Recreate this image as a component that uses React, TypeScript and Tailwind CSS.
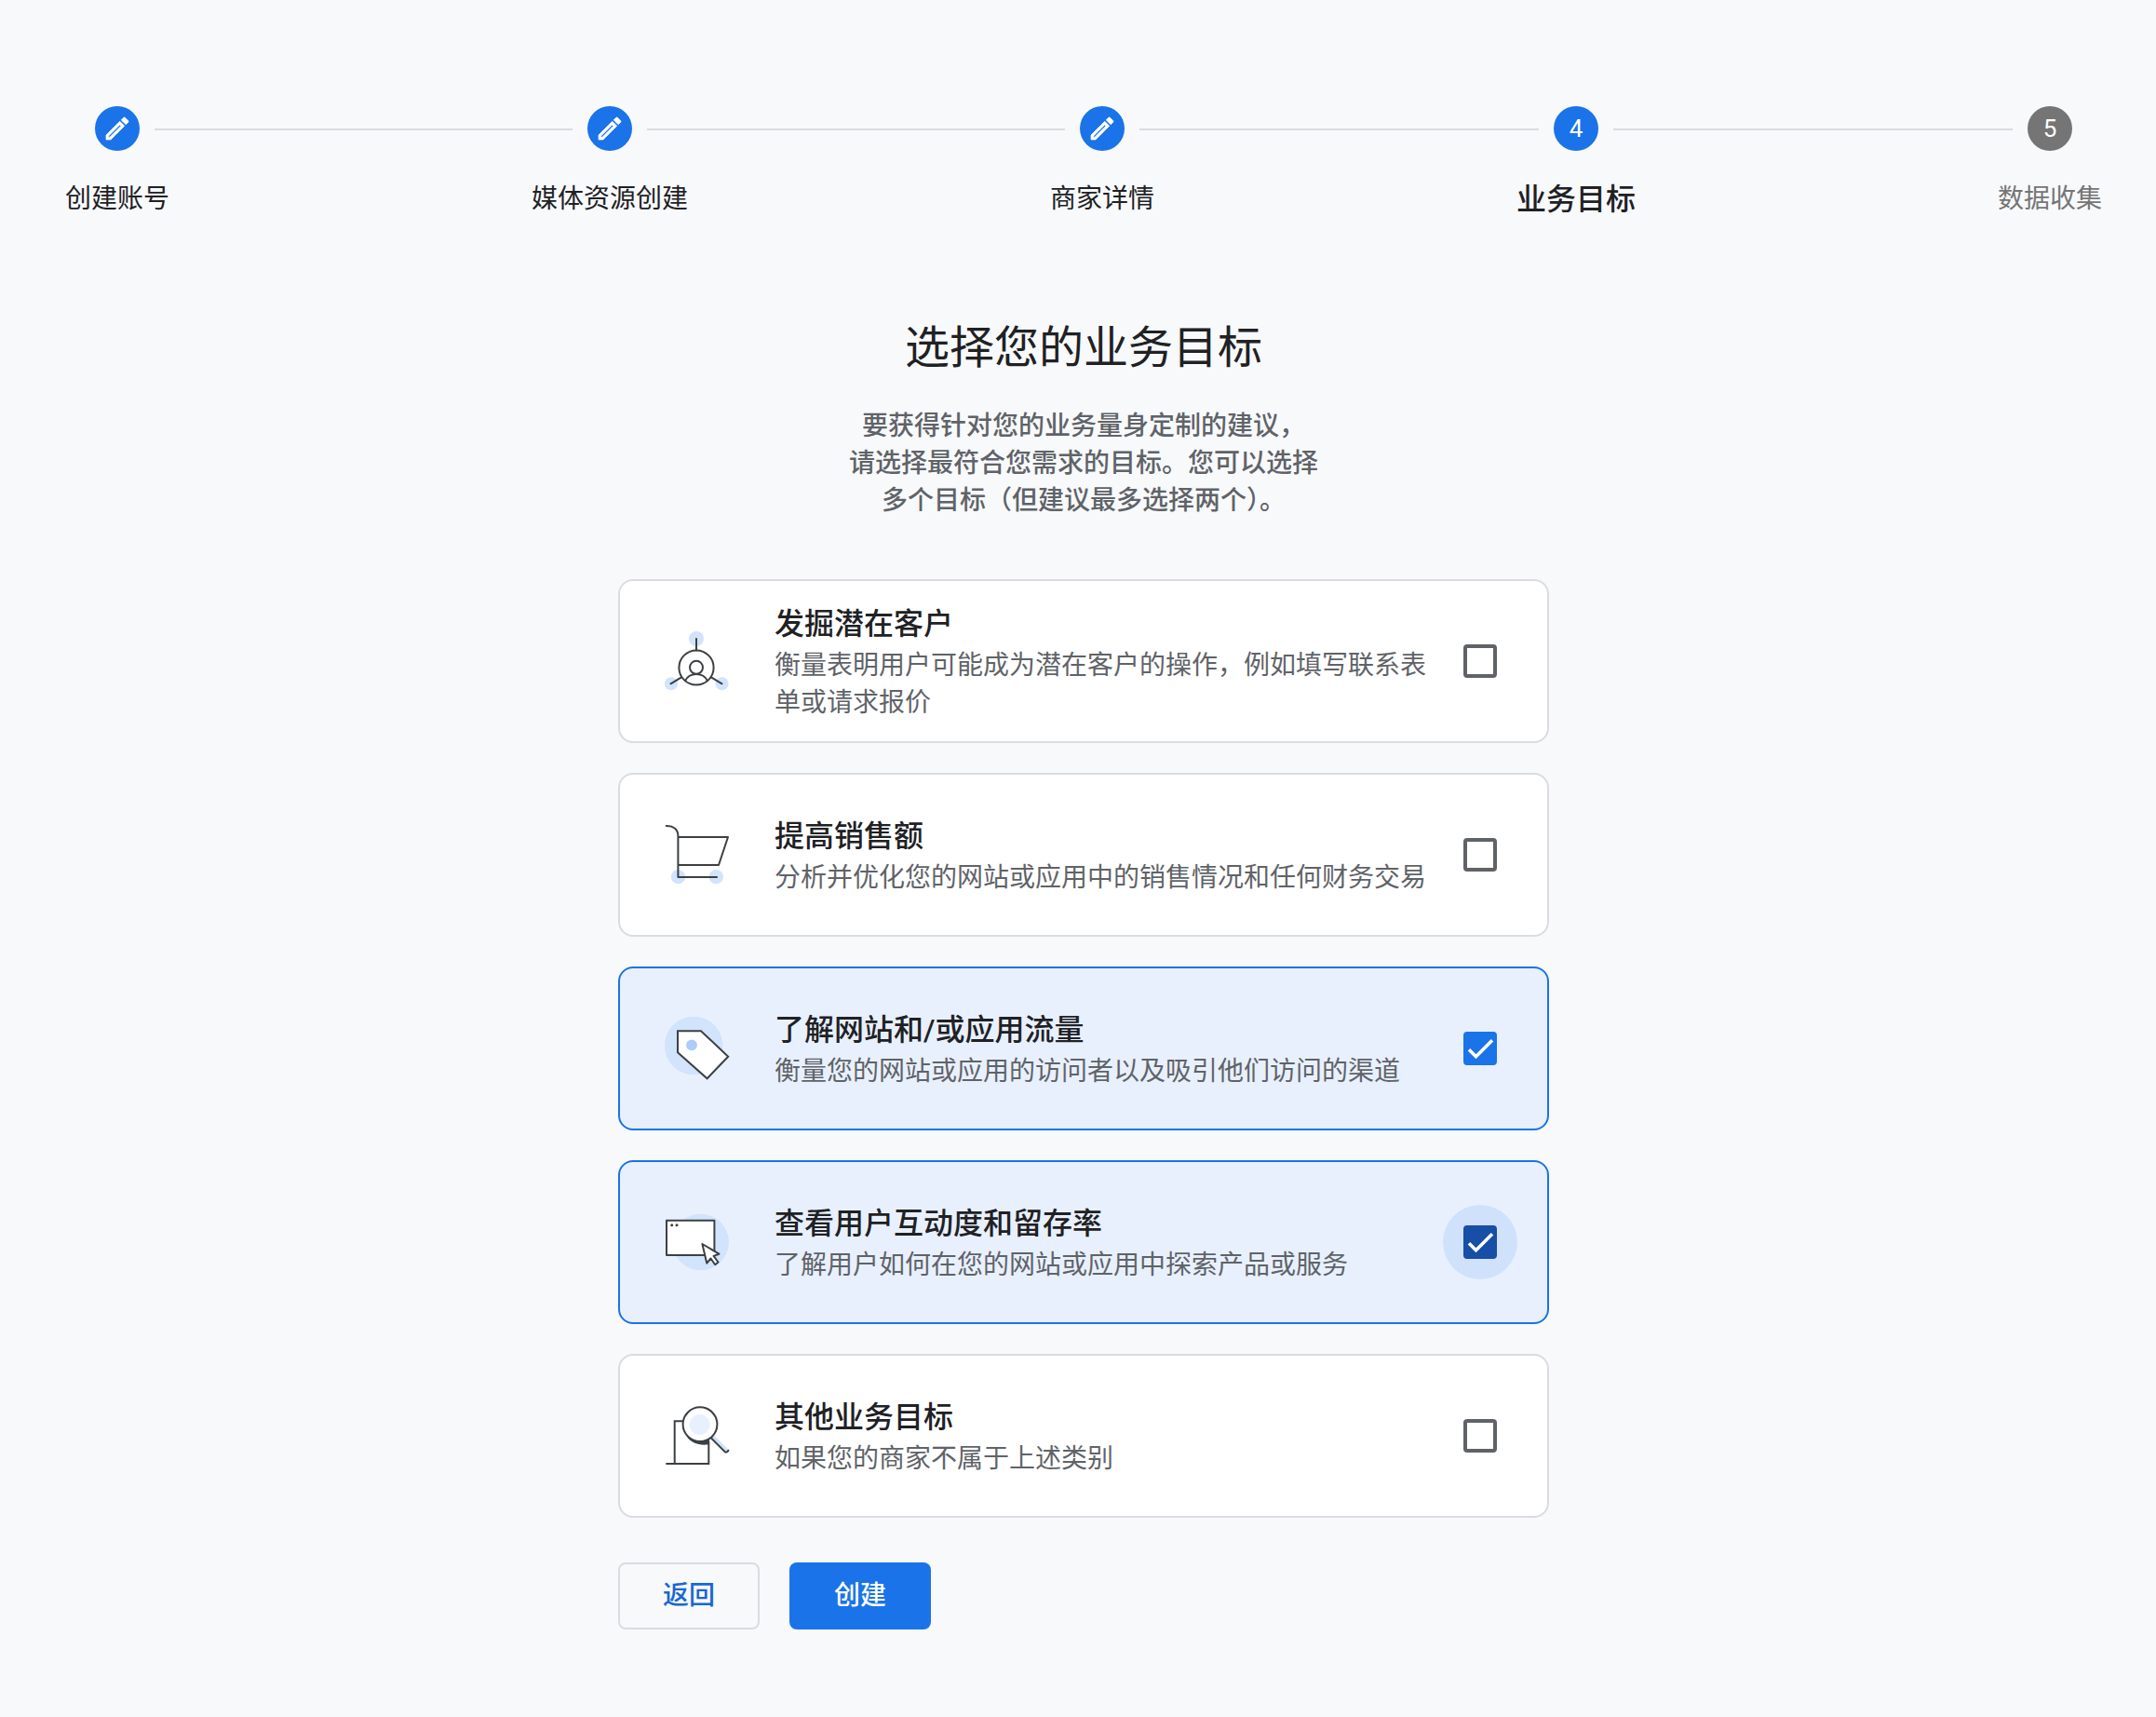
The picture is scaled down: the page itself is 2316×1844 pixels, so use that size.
import { useState, type ReactNode } from "react";
import { clsx } from "clsx";

type Goal = {
  id: string;
  title: string;
  description: string;
  icon: ReactNode;
};

type StepState = "done" | "current" | "todo";

const steps: { label: string; state: StepState }[] = [
  { label: "创建账号", state: "done" },
  { label: "媒体资源创建", state: "done" },
  { label: "商家详情", state: "done" },
  { label: "业务目标", state: "current" },
  { label: "数据收集", state: "todo" },
];

function PencilIcon() {
  return (
    <svg
      viewBox="0 0 24 24"
      className="size-8"
      fill="currentColor"
      stroke="currentColor"
      strokeWidth="0.5"
      strokeLinejoin="round"
      aria-hidden="true"
    >
      <path d="M14.06 9.02l.92.92L5.92 19H5v-.92l9.06-9.06M17.66 3c-.25 0-.51.1-.7.29l-1.83 1.83 3.75 3.75 1.83-1.83c.39-.39.39-1.02 0-1.41l-2.34-2.34c-.2-.2-.45-.29-.71-.29zm-3.6 3.19L3 17.25V21h3.75L17.81 9.94l-3.75-3.75z" />
    </svg>
  );
}

function LeadsIcon() {
  return (
    <svg viewBox="0 0 72 72" className="size-18 shrink-0" fill="none" aria-hidden="true">
      <g fill="#d2e3fc">
        <circle cx="36" cy="12" r="8" />
        <circle cx="9" cy="60.3" r="7" />
        <circle cx="63.5" cy="60.3" r="7" />
      </g>
      <g stroke="#3c4043" strokeWidth="2" strokeLinecap="round">
        <circle cx="36" cy="43" r="18.6" />
        <circle cx="36" cy="42.8" r="7" />
        <path d="M24.2 57c2-4.2 6.6-7 11.8-7s9.8 2.8 11.8 7M36 12v12.4M20 53.3L8.5 60.3M52 53.3l11.5 7" />
      </g>
    </svg>
  );
}

function CartIcon() {
  return (
    <svg viewBox="0 0 72 72" className="size-18 shrink-0" fill="none" aria-hidden="true">
      <circle cx="16.5" cy="59.7" r="7.6" fill="#d2e3fc" />
      <circle cx="57.3" cy="59.7" r="7.6" fill="#d2e3fc" />
      <path
        d="M3.8 5C11 4.6 16.4 8.5 16.4 16v44H58M16.4 17H70L60 47H16.4"
        stroke="#3c4043"
        strokeWidth="2"
        strokeLinecap="round"
        strokeLinejoin="round"
      />
    </svg>
  );
}

function TagIcon() {
  return (
    <svg viewBox="0 0 72 72" className="size-18 shrink-0" fill="none" aria-hidden="true">
      <circle cx="33.2" cy="33" r="31.3" fill="#d2e3fc" />
      <path d="M16 17.3h25l29.2 27.4-22.6 23.6L16 40.3z" fill="#fff" stroke="#3c4043" strokeWidth="2" />
      <circle cx="31" cy="32.3" r="5.9" fill="#aecbfa" />
    </svg>
  );
}

function WindowIcon() {
  return (
    <svg viewBox="0 0 72 72" className="size-18 shrink-0" fill="none" aria-hidden="true">
      <circle cx="40.7" cy="36" r="30.3" fill="#d2e3fc" />
      <g stroke="#3c4043" strokeWidth="2" fill="#fff" strokeLinejoin="round">
        <path d="M4 12.7h51.4V50H4z" />
        <path d="M42.4 38l18 10.7-5.8 2.2 4.9 6.6-3.3 2.7-4.7-6.7-4.2 5.2z" />
      </g>
      <circle cx="9.7" cy="17.7" r="1.5" fill="#3c4043" />
      <circle cx="15" cy="17.7" r="1.5" fill="#3c4043" />
    </svg>
  );
}

function SearchIcon() {
  return (
    <svg viewBox="0 0 72 72" className="size-18 shrink-0" fill="none" aria-hidden="true">
      <path d="M26 37c4 6.5 13 10 24 8.2V38z" fill="#3c4043" />
      <path d="M3.3 66h46V42M12.7 66V20.2H24" stroke="#3c4043" strokeWidth="2" />
      <path d="M52.5 38.5l3-2.5 15.2 15-3 2.8z" fill="#d2e3fc" />
      <path d="M52 38.5l15 15c1 .7 2.6-.2 3.4-1.8" stroke="#3c4043" strokeWidth="2" strokeLinecap="round" />
      <circle cx="40" cy="23.7" r="18.4" fill="#fff" stroke="#3c4043" strokeWidth="2" />
      <circle cx="39.6" cy="24" r="11" fill="#e8f0fe" />
    </svg>
  );
}

const goals: Goal[] = [
  {
    id: "leads",
    title: "发掘潜在客户",
    description: "衡量表明用户可能成为潜在客户的操作，例如填写联系表单或请求报价",
    icon: <LeadsIcon />,
  },
  {
    id: "sales",
    title: "提高销售额",
    description: "分析并优化您的网站或应用中的销售情况和任何财务交易",
    icon: <CartIcon />,
  },
  {
    id: "traffic",
    title: "了解网站和/或应用流量",
    description: "衡量您的网站或应用的访问者以及吸引他们访问的渠道",
    icon: <TagIcon />,
  },
  {
    id: "engagement",
    title: "查看用户互动度和留存率",
    description: "了解用户如何在您的网站或应用中探索产品或服务",
    icon: <WindowIcon />,
  },
  {
    id: "other",
    title: "其他业务目标",
    description: "如果您的商家不属于上述类别",
    icon: <SearchIcon />,
  },
];

function Line({ hidden }: { hidden?: boolean }) {
  return <span className={clsx("mt-6 h-[2px] flex-1", hidden ? "bg-transparent" : "bg-[#dadce0]")} />;
}

function Stepper() {
  return (
    <ol className="flex items-start px-[58px]">
      {steps.map((step, i) => (
        <li key={step.label} className={clsx("flex", i > 0 && "flex-auto")}>
          {i > 0 && <Line />}
          <div className="flex flex-col">
            <div className="flex items-start">
              <Line hidden={i === 0} />
              <span
                className={clsx(
                  "mx-4 flex size-12 items-center justify-center rounded-full text-[26px] text-white",
                  step.state === "todo" ? "bg-[#757575]" : "bg-[#1a73e8]"
                )}
              >
                {step.state === "done" ? <PencilIcon /> : i + 1}
              </span>
              <Line hidden={i === steps.length - 1} />
            </div>
            <span
              className={clsx(
                "mt-8 leading-10 whitespace-nowrap",
                step.state === "done" && "text-[28px]",
                step.state === "current" && "text-[32px] font-medium",
                step.state === "todo" && "text-[28px] text-[#757575]"
              )}
            >
              {step.label}
            </span>
          </div>
        </li>
      ))}
    </ol>
  );
}

interface GoalCardProps {
  goal: Goal;
  checked: boolean;
  active: boolean;
  onToggle: () => void;
}

function GoalCard({ goal, checked, active, onToggle }: GoalCardProps) {
  return (
    <label
      htmlFor={goal.id}
      className={clsx(
        "flex min-h-44 cursor-pointer items-center rounded-2xl border-2 pr-8 pl-[46px]",
        checked ? "border-[#1a73e8] bg-[#e8f0fe]" : "border-[#dadce0] bg-white"
      )}
    >
      {goal.icon}
      <span className="ml-12 flex flex-1 flex-col">
        <span className="text-[32px] leading-[50px] font-medium">{goal.title}</span>
        <span className="text-[28px] leading-10 text-[#5f6368]">{goal.description}</span>
      </span>
      <span
        className={clsx(
          "grid size-20 shrink-0 place-items-center rounded-full",
          active && "bg-[#d0e1fc]"
        )}
      >
        <input
          id={goal.id}
          type="checkbox"
          checked={checked}
          onChange={onToggle}
          className={clsx(
            "col-start-1 row-start-1 size-9 appearance-none rounded-sm border-4 outline-none",
            !checked && "border-[#5f6368]",
            checked && !active && "border-[#1a73e8] bg-[#1a73e8]",
            checked && active && "border-[#174ea6] bg-[#174ea6]"
          )}
        />
        {checked && (
          <svg viewBox="0 0 36 36" className="pointer-events-none col-start-1 row-start-1 size-9" fill="none" aria-hidden="true">
            <path d="M6 19.3l7.5 7.5L31 9.3" stroke="#fff" strokeWidth="3.6" />
          </svg>
        )}
      </span>
    </label>
  );
}

export default function App() {
  const [selected, setSelected] = useState<string[]>(["traffic", "engagement"]);
  const [activeId, setActiveId] = useState("engagement");

  const toggle = (id: string) => {
    setActiveId(id);
    setSelected((prev) => (prev.includes(id) ? prev.filter((g) => g !== id) : [...prev, id]));
  };

  return (
    <div
      lang="zh-CN"
      className="min-h-screen bg-[#f8f9fb] pt-[114px] pb-16 pl-3 font-[Roboto,'Noto_Sans_CJK_SC',sans-serif] text-[#202124]"
    >
      <Stepper />

      <main className="mx-auto mt-27 max-w-[1000px]">
        <h1 className="text-center text-[48px] leading-16 font-normal">选择您的业务目标</h1>
        <p className="mt-8 text-center text-[28px] leading-10 font-medium text-[#5f6368]">
          要获得针对您的业务量身定制的建议，
          <br />
          请选择最符合您需求的目标。您可以选择
          <br />
          多个目标（但建议最多选择两个）。
        </p>

        <div className="mt-16 flex flex-col gap-8">
          {goals.map((goal) => (
            <GoalCard
              key={goal.id}
              goal={goal}
              checked={selected.includes(goal.id)}
              active={activeId === goal.id}
              onToggle={() => toggle(goal.id)}
            />
          ))}
        </div>

        <div className="mt-12 flex gap-8">
          <button
            type="button"
            className="h-18 rounded-lg border-2 border-[#dadce0] px-[46px] text-[28px] font-medium text-[#1967d2]"
          >
            返回
          </button>
          <button type="button" className="h-18 rounded-lg bg-[#1a73e8] px-12 text-[28px] font-medium text-white">
            创建
          </button>
        </div>
      </main>
    </div>
  );
}
